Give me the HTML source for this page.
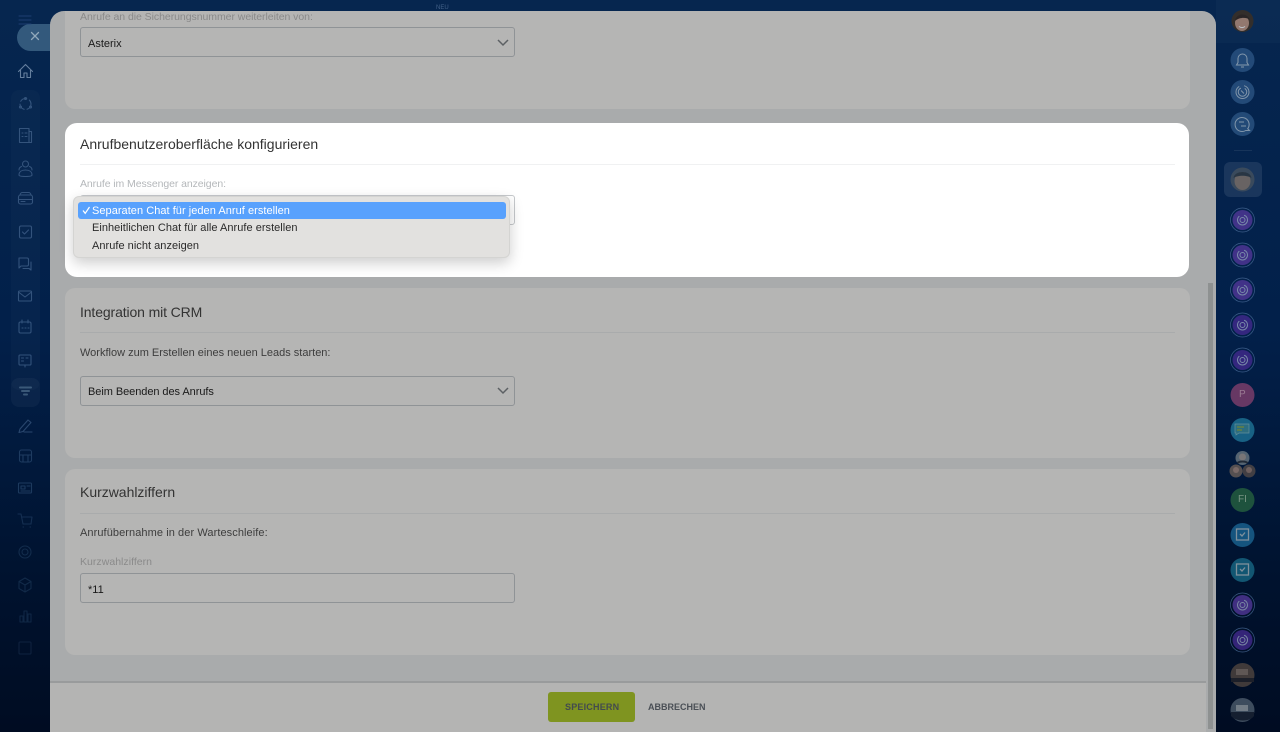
<!DOCTYPE html>
<html><head><meta charset="utf-8"><style>
*{box-sizing:border-box}
html,body{margin:0;padding:0;width:1280px;height:732px;overflow:hidden}
body{position:relative;font-family:"Liberation Sans",sans-serif;background:linear-gradient(180deg,#06264f 0%,#02204a 45%,#00122e 80%,#000c22 100%)}
.a{position:absolute}
.panel{left:50px;top:11px;width:1166px;height:721px;background:#a9abac;border-radius:14px 14px 0 0;overflow:hidden}
.card{position:absolute;left:65px;width:1125px;background:#b5b5b4;border-radius:10px}
.t{position:absolute;white-space:nowrap;line-height:16px}
.h{font-size:14px;color:#333}
.l{font-size:10.5px;color:#8a8a8a}
.d{font-size:11px;color:#3d3d3d}
.sel{position:absolute;left:80px;width:435px;height:30px;border:1px solid #8f9396;border-radius:3px}
.v{position:absolute;left:7px;top:8px;font-size:11px;line-height:16px;color:#1a1a1a;white-space:nowrap}
.hr{position:absolute;left:80px;width:1095px;height:1px;background:#a9abac}
svg{position:absolute;overflow:visible}
.ic{fill:none;stroke:#3f5f88;stroke-width:1.100;stroke-linecap:round;stroke-linejoin:round}
</style></head><body>

<!-- left sidebar -->
<div class="a" style="left:11px;top:90px;width:29px;height:300px;background:rgba(255,255,255,.02);border-radius:8px"></div>
<div class="a" style="left:11px;top:378px;width:29px;height:29px;background:rgba(255,255,255,.04);border-radius:8px"></div>
<div class="a" style="left:17px;top:24px;width:40px;height:27px;background:#33597c;border-radius:14px 0 0 14px"></div>
<svg class="ic" style="left:0;top:0;opacity:.8" width="50" height="732" viewBox="0 0 50 732">
<path d="M19 16h12M19 20h12M19 24h12" stroke="#24467a"/>
<path d="M31.500 32.500l7 7M38.500 32.500l-7 7" stroke="#a9bdcb" stroke-width="1.300"/>
<path d="M18.500 71.500l7-7 7 7M20.500 70v7.500h3.500v-4.500h3v4.500h3.500V70" stroke="#7d96b2"/>
<circle cx="25.500" cy="104" r="5.500" stroke-dasharray="7 3" />
<circle cx="25.500" cy="98.500" r="1"/><circle cx="20.500" cy="107" r="1"/><circle cx="30.500" cy="107" r="1"/>
<path d="M19.500 128.500h9.500v14h-9.500zM29 131.500h2.500v11H21M22 133h1M25 133h2M22 136.500h1M25 136.500h2"/>
<path d="M22.500 164a3 3 0 1 0 6 0a3 3 0 1 0-6 0"/><path d="M19 175c0-3.500 3-5 6.500-5s6.500 1.500 6.500 5c0 1-2 1.500-6.500 1.500S19 176 19 175z"/><path d="M19 170c0-2 1-3 2.500-3.500M32 170c0-2-1-3-2.500-3.500"/>
<rect x="18.500" y="195" width="14" height="9" rx="2"/><path d="M20 195c.5-2 1-2.500 2.500-2.500h6c1.500 0 2 .5 2.500 2.500M18.500 199.500h14M21 201.500h4"/>
<rect x="19.500" y="226" width="12" height="12" rx="1.500"/><path d="M22.500 232l2 2 4-4"/>
<path d="M19 258h8a1.500 1.500 0 0 1 1.500 1.500v5a1.500 1.500 0 0 1-1.500 1.500h-6l-2 2z"/><path d="M23 268.500h6l2 1.500v-8"/>
<rect x="18.500" y="291" width="13" height="10" rx="1"/><path d="M18.500 292l6.500 5 6.500-5"/>
<rect x="19" y="322" width="12" height="11" rx="1.500"/><path d="M22 320v3M28 320v3M22 328h1M25 328h1M28 328h1"/>
<rect x="19" y="355" width="12" height="10" rx="1"/><path d="M21.500 358h2M21.500 361h2M26 358h2M25 365v2"/>
<path d="M20 387.500h11M22 391h7M24 394.500h3" stroke="#466584" stroke-width="2"/>
<path d="M20 429l8-9 3 2.500-8 9-4 1zM24 432h8" stroke="#34527a"/>
<rect x="19.500" y="450" width="12" height="12" rx="2" stroke="#26446a"/><path d="M19.500 455h12M23 455v7M28 455v7" stroke="#26446a"/>
<rect x="18.500" y="483" width="13" height="10" rx="1" stroke="#254368"/><path d="M21 486h4v3h-4zM27 486h3M21 491h9" stroke="#254368"/>
<path d="M18 514h3l2 10h8l1-7H22M23 527h.5M30 527h.5" stroke="#1a3659"/>
<circle cx="25" cy="552" r="6" stroke="#173353"/><circle cx="25" cy="552" r="3" stroke="#173353"/>
<path d="M25 578l6 3.500v7L25 592l-6-3.500v-7zM19 581.500l6 3.500 6-3.500M25 585v7" stroke="#16304f"/>
<path d="M20 622v-6h3v6zM24 622v-11h3v11zM28 622v-8h3v8z" stroke="#152d4c"/>
<rect x="19" y="642" width="12" height="12" rx="1" stroke="#112745"/>
</svg>

<!-- top NEU -->
<div class="t" style="left:436px;top:3px;font-size:6px;line-height:10px;color:#436188">NEU</div>

<!-- main panel -->
<div class="a panel"></div>

<!-- card 1 -->
<div class="card" style="top:11px;height:98px;border-radius:0 0 10px 10px"></div>
<div class="t l" style="left:80px;top:9px;letter-spacing:-.05px">Anrufe an die Sicherungsnummer weiterleiten von:</div>
<div class="sel" style="top:27px"><div class="v">Asterix</div><svg style="left:416px;top:11px" width="12" height="8"><path d="M1 1l5 5 5-5" fill="none" stroke="#5c6064" stroke-width="1.500"/></svg></div>

<!-- highlighted card -->
<div class="card" style="top:123px;height:154px;width:1124px;background:#fff;border-radius:12px"></div>
<div class="t h" style="left:80px;top:136px">Anrufbenutzeroberfläche konfigurieren</div>
<div class="hr" style="top:164px;background:#f0f1f2"></div>
<div class="t l" style="left:80px;top:176px;color:#b4b7ba;letter-spacing:-.08px">Anrufe im Messenger anzeigen:</div>
<div class="sel" style="top:195px;border-color:#c6c9cc"></div>

<!-- dropdown -->
<div class="a" style="left:73px;top:196px;width:437px;height:62px;background:#e2e1df;border:1px solid #d4d4d2;border-radius:6px;box-shadow:0 5px 14px rgba(0,0,0,.2)"></div>
<div class="a" style="left:78px;top:202px;width:428px;height:17px;background:#58a1fd;border-radius:3px"></div>
<svg style="left:82px;top:206px" width="9" height="9"><path d="M1 4.500l2.200 2.800L7.500 1" fill="none" stroke="#fff" stroke-width="1.200"/></svg>
<div class="t" style="left:92px;top:203px;font-size:11px;color:#fff;letter-spacing:.04px">Separaten Chat für jeden Anruf erstellen</div>
<div class="t" style="left:92px;top:220px;font-size:11px;color:#2a2a2a;letter-spacing:.03px">Einheitlichen Chat für alle Anrufe erstellen</div>
<div class="t" style="left:92px;top:238px;font-size:11px;color:#2a2a2a;letter-spacing:.03px">Anrufe nicht anzeigen</div>

<!-- CRM card -->
<div class="card" style="top:288px;height:170px"></div>
<div class="t h" style="left:80px;top:304px;letter-spacing:-.12px">Integration mit CRM</div>
<div class="hr" style="top:332px"></div>
<div class="t d" style="left:80px;top:345px">Workflow zum Erstellen eines neuen Leads starten:</div>
<div class="sel" style="top:376px"><div class="v" style="letter-spacing:-.06px;top:7px">Beim Beenden des Anrufs</div><svg style="left:416px;top:10px" width="12" height="8"><path d="M1 1l5 5 5-5" fill="none" stroke="#5c6064" stroke-width="1.500"/></svg></div>

<!-- Kurzwahl card -->
<div class="card" style="top:469px;height:186px"></div>
<div class="t h" style="left:80px;top:484px;letter-spacing:-.02px">Kurzwahlziffern</div>
<div class="hr" style="top:513px"></div>
<div class="t d" style="left:80px;top:525px;letter-spacing:.08px">Anrufübernahme in der Warteschleife:</div>
<div class="t l" style="left:80px;top:554px;letter-spacing:.03px">Kurzwahlziffern</div>
<div class="sel" style="top:573px"><div class="v">*11</div></div>

<!-- scrollbar -->
<div class="a" style="left:1208px;top:283px;width:5px;height:446px;background:#8e9191"></div>

<!-- footer -->
<div class="a" style="left:50px;top:681px;width:1156px;height:51px;background:#b4b4b3;border-top:2px solid #999b9c"></div>
<div class="a" style="left:548px;top:692px;width:87px;height:30px;background:#7f9420;border-radius:3px"></div>
<div class="t" style="left:565px;top:699px;font-size:9px;font-weight:bold;color:#434b4e;letter-spacing:.2px">SPEICHERN</div>
<div class="t" style="left:648px;top:699px;font-size:9px;font-weight:bold;color:#4a4f56;letter-spacing:0">ABBRECHEN</div>

<!-- right sidebar -->
<div class="a" style="left:1216px;top:0;width:64px;height:43px;background:rgba(255,255,255,.025)"></div>
<div class="a" style="left:1224px;top:162px;width:38px;height:35px;background:rgba(255,255,255,.09);border-radius:6px"></div>
<div class="a" style="left:1234px;top:150px;width:18px;height:1px;background:rgba(255,255,255,.08)"></div>

<svg style="left:1216px;top:0;opacity:.78" width="64" height="732" viewBox="1216 0 64 732">
<!-- avatar top -->
<circle cx="1242.500" cy="21" r="11" fill="#3f3020"/><ellipse cx="1242" cy="23" rx="7" ry="8" fill="#b88f78"/><path d="M1235 21c1-8 12-9 15-1c-3-3-11-3-15 1z" fill="#33241a"/><path d="M1239 26.500c2 1.500 4 1.500 6 0" stroke="#eee" fill="none"/>
<g fill="#2c5584"><circle cx="1242.500" cy="60" r="12"/><circle cx="1242.500" cy="92" r="12"/><circle cx="1242.500" cy="124" r="12"/></g>
<path d="M1236.500 65h12l-1.500-2.500v-4a4.500 4.500 0 0 0-9 0v4zM1241 67h3" fill="none" stroke="#a9bac8" stroke-width="1"/>
<g fill="none" stroke="#a3b5c5" stroke-width="1"><circle cx="1242.500" cy="92" r="6.500" stroke-dasharray="27 5"/><circle cx="1242.500" cy="92" r="4.200" stroke-dasharray="18 4"/><path d="M1241 90.500l3 3"/></g>
<g fill="none" stroke="#a3b5c5" stroke-width="1"><path d="M1249.500 130.500l-1.800-1.800a7 7 0 1 0-2 1.800z"/><path d="M1239 122h5M1246 126h-5"/></g>
<!-- selected avatar -->
<circle cx="1242.500" cy="179.500" r="12" fill="#44505c"/><ellipse cx="1242.500" cy="181" rx="8" ry="9" fill="#7e7066"/><path d="M1233.500 178c1-8 17-8 18 0c-4-3-14-3-18 0z" fill="#2e373e"/>
<!-- purple chats -->
<g fill="#53389a"><circle cx="1242.500" cy="220" r="10"/><circle cx="1242.500" cy="255" r="10"/><circle cx="1242.500" cy="290" r="10"/><circle cx="1242.500" cy="325" r="10" fill="#432a8e"/><circle cx="1242.500" cy="360" r="10" fill="#432a8e"/><circle cx="1242.500" cy="605" r="10"/><circle cx="1242.500" cy="640" r="10" fill="#432a8e"/></g>
<g fill="none" stroke="#4d6f9c" stroke-width=".7"><circle cx="1242.500" cy="220" r="12"/><circle cx="1242.500" cy="255" r="12"/><circle cx="1242.500" cy="290" r="12"/><circle cx="1242.500" cy="325" r="12"/><circle cx="1242.500" cy="360" r="12"/><circle cx="1242.500" cy="605" r="12"/><circle cx="1242.500" cy="640" r="12"/></g>
<g fill="none" stroke="#9aa8c4" stroke-width="1"><circle cx="1242.500" cy="220" r="5" stroke-dasharray="20 5"/><circle cx="1242.500" cy="220" r="2.500"/><circle cx="1242.500" cy="255" r="5" stroke-dasharray="20 5"/><circle cx="1242.500" cy="255" r="2.500"/><circle cx="1242.500" cy="290" r="5" stroke-dasharray="20 5"/><circle cx="1242.500" cy="290" r="2.500"/><circle cx="1242.500" cy="325" r="5" stroke-dasharray="20 5"/><circle cx="1242.500" cy="325" r="2.500"/><circle cx="1242.500" cy="360" r="5" stroke-dasharray="20 5"/><circle cx="1242.500" cy="360" r="2.500"/><circle cx="1242.500" cy="605" r="5" stroke-dasharray="20 5"/><circle cx="1242.500" cy="605" r="2.500"/><circle cx="1242.500" cy="640" r="5" stroke-dasharray="20 5"/><circle cx="1242.500" cy="640" r="2.500"/></g>
<circle cx="1242.500" cy="395" r="12" fill="#84406e"/>
<circle cx="1242.500" cy="430" r="12" fill="#1f7698"/><path d="M1235 424h14v9h-10l-3 2v-2h-1z" fill="#3a8592" stroke="#7fb0b6" stroke-width=".7"/><path d="M1237 427h7M1237 430h5" stroke="#8da434" stroke-width="1.200"/>
<circle cx="1242.500" cy="458" r="7" fill="#6d7a82"/><circle cx="1242.500" cy="457" r="3.500" fill="#9a8f88"/><path d="M1237.500 463c2-2 8-2 10 0" stroke="#2b3036" fill="none" stroke-width="2"/>
<circle cx="1236" cy="471" r="6.500" fill="#6e6058"/><circle cx="1249" cy="471" r="6.500" fill="#554b47"/><circle cx="1236" cy="470" r="3" fill="#9b8074"/><circle cx="1249" cy="470" r="3" fill="#8d7468"/>
<circle cx="1242.500" cy="500" r="12" fill="#27633f"/>
<circle cx="1242.500" cy="535" r="12" fill="#1b6694"/><circle cx="1242.500" cy="570" r="12" fill="#186a86"/>
<g fill="none" stroke="#a3b3ba" stroke-width="1.300"><rect x="1236.500" y="529" width="12" height="11"/><path d="M1240 534l2 2 3-3.500"/><rect x="1236.500" y="564" width="12" height="11"/><path d="M1240 569l2 2 3-3.500"/></g>
<circle cx="1242.500" cy="675" r="12" fill="#524740"/><rect x="1231" y="678" width="23" height="4" fill="#25252a"/><rect x="1236" y="669" width="12" height="6" fill="#7a6c62"/>
<circle cx="1242.500" cy="710" r="12" fill="#4f5e6e"/><path d="M1231 712h23v4c-4 6-18 6-23 0z" fill="#1c2534"/><rect x="1236" y="705" width="12" height="6" fill="#939ca2"/>
</svg>
<div class="t" style="left:1239px;top:387px;font-size:10px;color:#9a7b93">P</div>
<div class="t" style="left:1238px;top:492px;font-size:10px;color:#789483">FI</div>
</body></html>
